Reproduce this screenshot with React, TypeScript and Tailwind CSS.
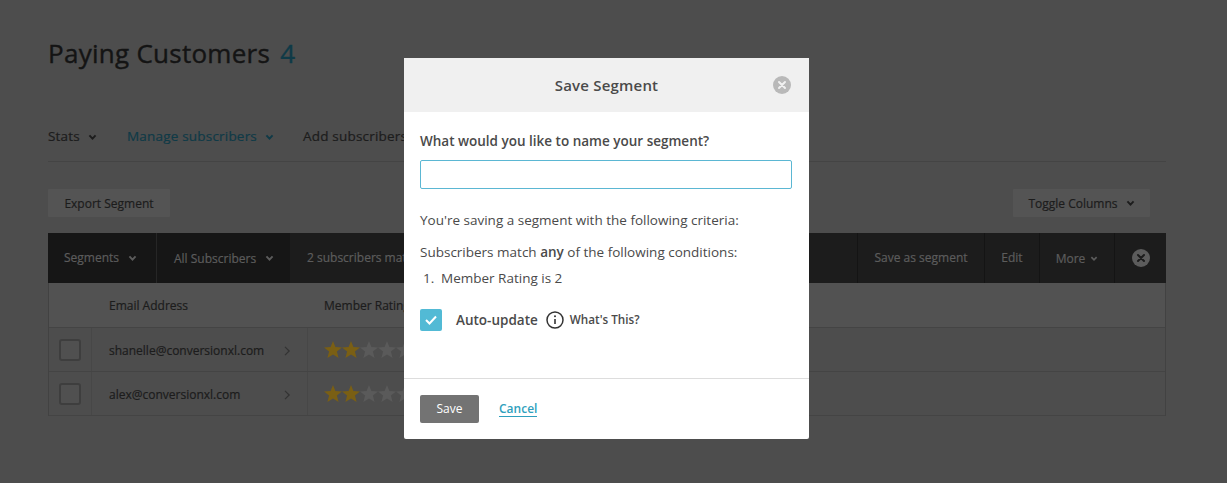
import React from 'react';

const Chevron: React.FC<{ className?: string }> = ({ className }) => (
  <svg viewBox="0 0 10 8" className={className} fill="none" stroke="currentColor" strokeWidth="2.2">
    <path d="M1.5 1.6 5 5.2l3.5-3.6" />
  </svg>
);

const CloseCircle: React.FC<{ bg: string; fg: string }> = ({ bg, fg }) => (
  <svg viewBox="0 0 18 18" className="w-[18px] h-[18px]">
    <circle cx="9" cy="9" r="9" fill={bg} />
    <path d="M6 6l6 6M12 6l-6 6" stroke={fg} strokeWidth="2" strokeLinecap="round" />
  </svg>
);

const Star: React.FC<{ color: string }> = ({ color }) => (
  <svg viewBox="0 0 18 18" className="w-[18px] h-[18px]">
    <path d="M9 0l2.4 6.1 6.6.3-5.1 4.2 1.7 6.4L9 13.4 3.4 17l1.7-6.4L0 6.4l6.6-.3z" fill={color} />
  </svg>
);

const rows = ['shanelle@conversionxl.com', 'alex@conversionxl.com'];

const Background = () => (
  <div className="pl-[48px] pr-[61px] [-webkit-text-stroke:0.2px]">
    <div className="pt-[35px] h-[104px] text-[26px] leading-[36px] tracking-[0.27px] text-[#141414] flex gap-[10px] [-webkit-text-stroke:0.4px]">
      <span>Paying Customers</span>
      <span className="text-[#0f3a47]">4</span>
    </div>
    <div className="h-[58px] border-b border-[#444444] flex items-center text-[13.5px] tracking-[0.2px] pt-[8px] text-[#1c1c1c]">
      <span>Stats</span>
      <Chevron className="w-[9px] h-[7px] ml-[8px] mt-[1px]" />
      <span className="ml-[30px] text-[#0f3a47]">Manage subscribers</span>
      <Chevron className="w-[9px] h-[7px] ml-[8px] mt-[1px] text-[#0f3a47]" />
      <span className="ml-[29px]">Add subscribers</span>
    </div>
    <div className="flex justify-between pt-[27px] pr-[16px] h-[71px] text-[12px] text-[#1c1c1c]">
      <div className="w-[122px] h-[28px] pt-[1px] bg-[#545454] rounded-[1px] flex items-center justify-center">Export Segment</div>
      <div className="w-[137px] h-[28px] pt-[1px] bg-[#545454] rounded-[1px] flex items-center justify-center gap-[8px]">
        Toggle Columns
        <Chevron className="w-[9px] h-[7px]" />
      </div>
    </div>
    <div className="h-[50px] bg-[#1c1c1c] flex items-center text-[12px] text-[#5c5c5c]">
      <div className="w-[109px] h-full bg-[#161616] border-r border-[#262626] flex items-center pl-[16px] gap-[9px]">
        Segments
        <Chevron className="w-[9px] h-[7px]" />
      </div>
      <div className="w-[133px] h-full bg-[#161616] flex items-center pl-[17px] pt-[1px] gap-[9px]">
        All Subscribers
        <Chevron className="w-[9px] h-[7px]" />
      </div>
      <div className="pl-[17px] flex-1">2 subscribers match</div>
      <div className="w-[127px] h-full border-l border-[#141414] flex items-center justify-center">Save as segment</div>
      <div className="w-[55px] h-full border-l border-[#141414] flex items-center justify-center">Edit</div>
      <div className="w-[75px] h-full border-l border-[#141414] pt-[1px] flex items-center justify-center gap-[5px]">
        More
        <Chevron className="w-[8px] h-[6px]" />
      </div>
      <div className="w-[52px] h-full border-l border-[#141414] flex items-center justify-center">
        <CloseCircle bg="#5c5c5c" fg="#1c1c1c" />
      </div>
    </div>
    <div className="border-x border-[#424242] text-[12px] text-[#1c1c1c]">
      <div className="h-[45px] pt-[2px] bg-[#525252] border-b border-[#444444] flex items-center">
        <span className="ml-[60px] w-[215px]">Email Address</span>
        <span>Member Rating</span>
      </div>
      {rows.map((email) => (
        <div key={email} className="h-[44px] flex items-center border-b border-[#444444]">
          <div className="w-[43px] h-full flex items-center justify-center border-r border-[#474747]">
            <div className="w-[22px] h-[22px] rounded-[3px] border-2 border-[#3e3e3e] bg-[#505050]" />
          </div>
          <div className="w-[216px] h-full flex items-center justify-between pl-[17px] pr-[16px] pt-[2px] border-r border-[#474747]">
            {email}
            <svg viewBox="0 0 8 12" className="w-[7px] h-[10px] text-[#333333]" fill="none" stroke="currentColor" strokeWidth="1.5">
              <path d="M1 1l5 5-5 5" />
            </svg>
          </div>
          <div className="flex pl-[16px]">
            <Star color="#7a5f14" />
            <Star color="#7a5f14" />
            <Star color="#5a5a5a" />
            <Star color="#5a5a5a" />
            <Star color="#5a5a5a" />
          </div>
        </div>
      ))}
    </div>
  </div>
);

const SaveSegmentModal = () => (
  <div className="absolute left-[404px] top-[58px] w-[405px] h-[381px] bg-white rounded-[2px] flex flex-col text-[#4a4a4a] text-[13.5px]">
    <div className="relative h-[54px] bg-[#f0f0f0] flex items-center justify-center text-[15px] font-semibold tracking-[0.2px] text-[#4a4a4a]">
      Save Segment
      <div className="absolute right-[18px] top-[18px]">
        <CloseCircle bg="#b9b9b9" fg="#f0f0f0" />
      </div>
    </div>
    <div className="flex-1 px-[16px] pt-[19px]">
      <div className="font-semibold leading-[20px]">What would you like to name your segment?</div>
      <input className="block w-[372px] h-[29px] mt-[9px] border border-[#5bb7d3] rounded-[2px] outline-none" />
      <p className="mt-[21px] leading-[20px]">You're saving a segment with the following criteria:</p>
      <p className="mt-[12px] leading-[20px]">
        Subscribers match <b className="font-semibold">any</b> of the following conditions:
      </p>
      <div className="mt-[6px] leading-[20px] flex">
        <span className="ml-[3px] w-[18px]">1.</span>
        <span>Member Rating is 2</span>
      </div>
      <div className="mt-[21px] flex items-center h-[22px]">
        <div className="w-[22px] h-[22px] rounded-[2px] bg-[#52bad5] flex items-center justify-center">
          <svg viewBox="0 0 12 10" className="w-[12px] h-[10px]" fill="none" stroke="#ffffff" strokeWidth="2">
            <path d="M1 5l3.5 3.5L11 1.5" />
          </svg>
        </div>
        <span className="ml-[14px] font-semibold">Auto-update</span>
        <svg viewBox="0 0 18 18" className="w-[18px] h-[18px] ml-[8px]" fill="none" stroke="#333333">
          <circle cx="9" cy="9" r="8" strokeWidth="1.5" />
          <path d="M9 8v5" strokeWidth="1.6" />
          <circle cx="9" cy="5.3" r="1" fill="#333333" stroke="none" />
        </svg>
        <span className="ml-[6px] text-[11.7px] font-semibold">What's This?</span>
      </div>
    </div>
    <div className="h-[61px] border-t border-[#dddddd] flex items-center px-[16px] pb-[1px]">
      <div className="w-[59px] h-[28px] bg-[#737373] rounded-[2px] text-white text-[12px] font-medium flex items-center justify-center">Save</div>
      <span className="ml-[20px] pt-[1px] text-[12px] font-semibold text-[#2f9fbd] border-b border-[#2f9fbd] leading-[15px]">Cancel</span>
    </div>
  </div>
);

export default function App() {
  return (
    <div className="relative w-[1227px] h-[483px] overflow-hidden bg-[#4d4d4d] font-['Open_Sans',sans-serif]">
      <Background />
      <SaveSegmentModal />
    </div>
  );
}
